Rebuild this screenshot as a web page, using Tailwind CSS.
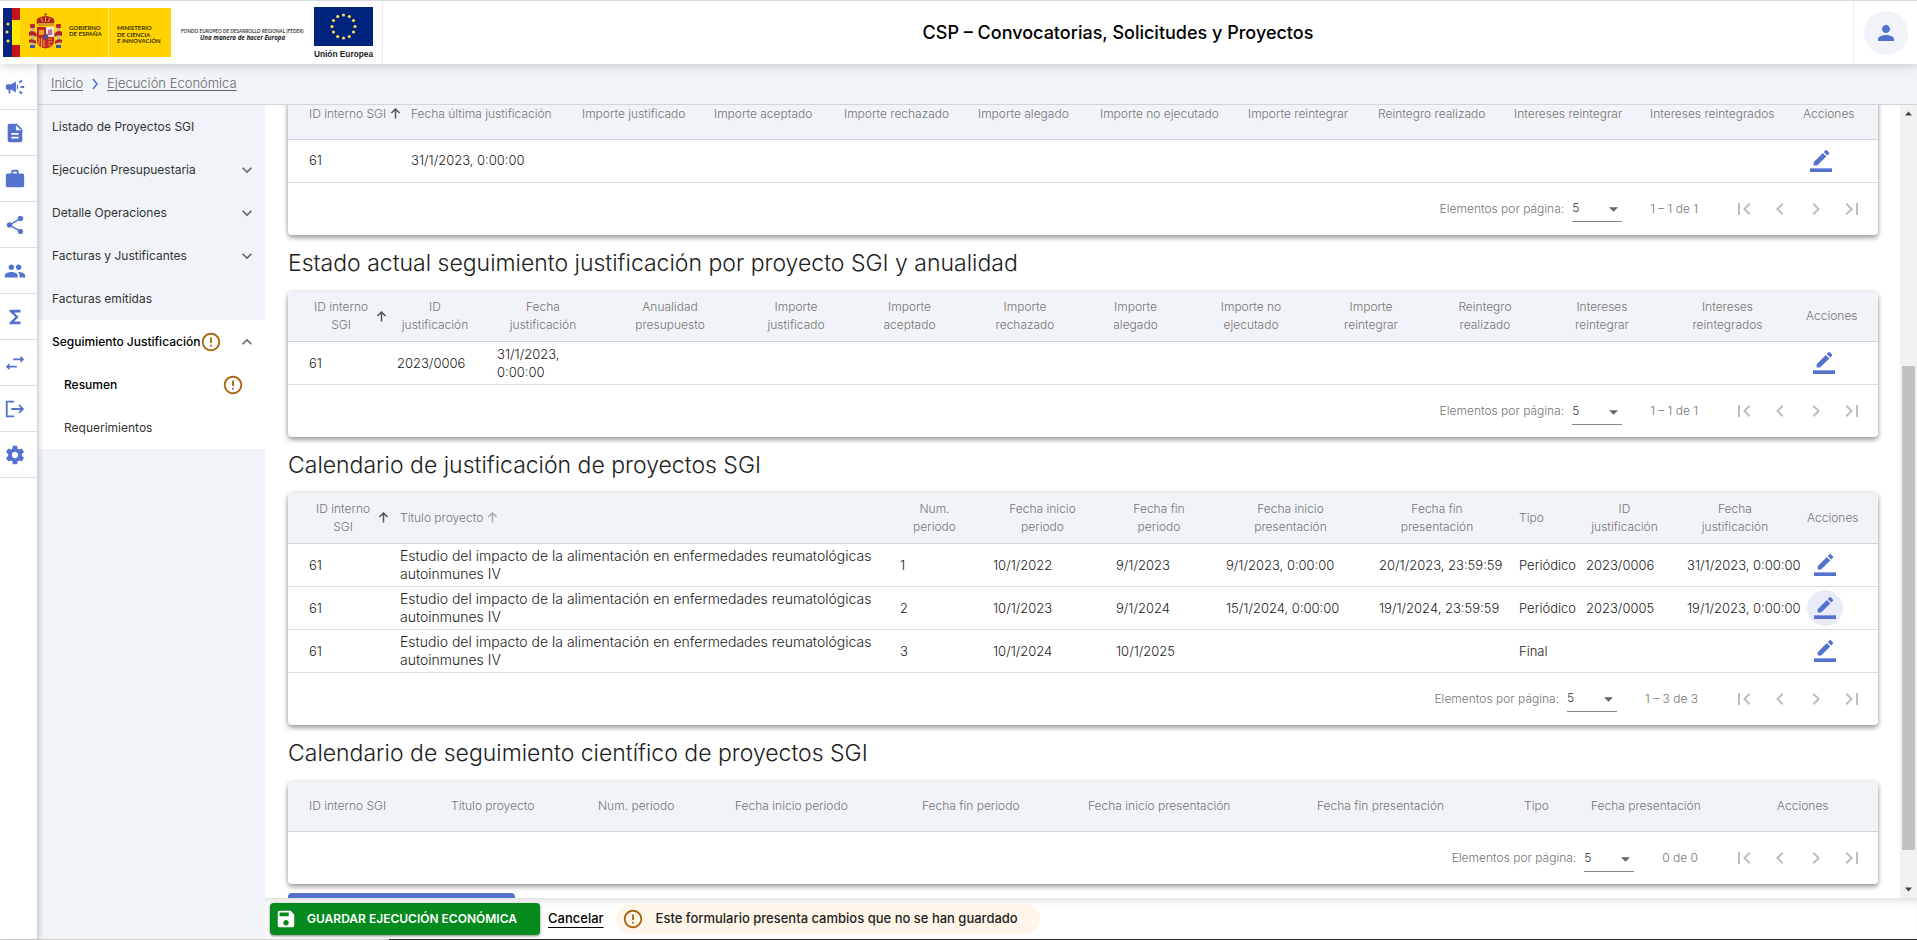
<!DOCTYPE html>
<html lang="es">
<head>
<meta charset="utf-8">
<meta name="viewport" content="width=device-width, initial-scale=1">
<title>CSP – Convocatorias, Solicitudes y Proyectos</title>
<script src="https://cdn.jsdelivr.net/npm/@tailwindcss/browser@4"></script>
</head>
<body class="h-screen flex flex-col overflow-hidden bg-white font-['Inter','Liberation_Sans',sans-serif] text-[#212121]">

<!-- Shared icons -->
<svg class="hidden" aria-hidden="true">
  <symbol id="i-edit" viewBox="0 0 24 24"><path d="M17.75 7L14 3.25l-10 10V17h3.75l10-10zm2.96-2.96a1 1 0 000-1.41L18.37.29a1 1 0 00-1.41 0L15 2.25 18.75 6l1.96-1.96z"/><path d="M0 20h24v4H0z"/></symbol>
  <symbol id="i-up" viewBox="0 0 12 12"><path d="M6 11.500V1.500M1.500 5.500L6 1.200l4.500 4.300" fill="none" stroke="currentColor" stroke-width="1.600"/></symbol>
  <symbol id="i-down" viewBox="0 0 24 24"><path d="M7.410 8.590L12 13.170l4.590-4.580L18 10l-6 6-6-6z"/></symbol>
  <symbol id="i-upc" viewBox="0 0 24 24"><path d="M12 8l-6 6 1.410 1.410L12 10.830l4.590 4.580L18 14z"/></symbol>
  <symbol id="i-first" viewBox="0 0 24 24"><path d="M18.410 16.590L13.820 12l4.590-4.590L17 6l-6 6 6 6zM6 6h2v12H6z"/></symbol>
  <symbol id="i-prev" viewBox="0 0 24 24"><path d="M15.410 7.410L14 6l-6 6 6 6 1.410-1.410L10.830 12z"/></symbol>
  <symbol id="i-next" viewBox="0 0 24 24"><path d="M10 6L8.590 7.410 13.170 12l-4.580 4.590L10 18l6-6z"/></symbol>
  <symbol id="i-last" viewBox="0 0 24 24"><path d="M5.590 7.410L10.180 12l-4.590 4.590L7 18l6-6-6-6zM16 6h2v12h-2z"/></symbol>
  <symbol id="i-warn" viewBox="0 0 24 24"><path d="M11 15h2v2h-2zm0-8h2v6h-2zm.99-5C6.470 2 2 6.480 2 12s4.470 10 9.990 10C17.520 22 22 17.520 22 12S17.520 2 11.990 2zM12 20c-4.420 0-8-3.580-8-8s3.580-8 8-8 8 3.580 8 8-3.580 8-8 8z"/></symbol>
  <symbol id="i-caret" viewBox="0 0 10 5"><path d="M0 0l5 5 5-5z"/></symbol>
</svg>

<header class="relative z-20 shrink-0 h-16 flex border-t border-[#d8dcdc] bg-white shadow-[0_3px_8px_rgba(0,0,0,0.14)]">
  <div class="w-[383px] shrink-0 border-r border-[#ebecf2]">
    <svg class="block w-[382px] h-[62px]" viewBox="0 1 382 62" role="img" aria-label="Gobierno de España, Ministerio de Ciencia e Innovación, Unión Europea">
      <rect x="3" y="8" width="168" height="49" fill="#ffd200"/>
      <rect x="3" y="8" width="9" height="49" fill="#08247f"/>
      <rect x="12" y="8" width="8" height="49" fill="#c1141b"/>
      <rect x="12" y="20" width="8" height="25" fill="#ffe800"/>
      <g fill="#ffe34a"><circle cx="8" cy="24" r="1.500"/><circle cx="7" cy="32" r="1.500"/><circle cx="8" cy="41" r="1.500"/></g>
      <rect x="108" y="8" width="1" height="49" fill="#ffe680"/>
      <!-- Coat of arms -->
      <g>
        <rect x="31" y="27" width="3" height="18" fill="#b9b4a8"/><rect x="57" y="27" width="3" height="18" fill="#b9b4a8"/>
        <rect x="30" y="24" width="5" height="4" rx="1" fill="#c1272d"/><rect x="56" y="24" width="5" height="4" rx="1" fill="#c1272d"/>
        <path d="M29 32q4-3 8 2l-1 3q-3-3-7-1zM62 32q-4-3-8 2l1 3q3-3 7-1z" fill="#b5232a"/>
        <path d="M29 40q3-2 7 1v3q-4-3-7-1zM62 40q-3-2-7 1v3q4-3 7-1z" fill="#b5232a"/>
        <rect x="30" y="45" width="5" height="3" fill="#3c5a9a"/><rect x="56" y="45" width="5" height="3" fill="#3c5a9a"/>
        <path d="M37 24q-2-6 4-7 5-2 9 0 6 1 4 7z" fill="#b5232a"/>
        <path d="M38 23h16v3H38z" fill="#d79a1e"/><path d="M41 18l2 4M50 18l-2 4M45.500 16v6" stroke="#f0b429" stroke-width="1"/>
        <path d="M45.500 13v4M44 14.500h3" stroke="#8c5a12" stroke-width="1"/>
        <path d="M37 27h17v14q0 6-8.500 7.500Q37 47 37 41z" fill="#c1272d"/>
        <path d="M46 27h8v10h-8z" fill="#ece2e4"/><path d="M48 35v-5l4-1v6z" fill="#b66a9a"/>
        <path d="M39 30h5v5h-5z" fill="#e2a52a"/><path d="M39 38v7M41.500 38v9M44 38v9" stroke="#f0b429" stroke-width="1"/>
        <path d="M48 39h4M48 42h4M48 45h3" stroke="#e2a52a" stroke-width="1"/>
        <ellipse cx="45.500" cy="37" rx="2.500" ry="3" fill="#3b4f9c" stroke="#c1272d"/>
      </g>
      <g fill="#3a3108" font-family="Lato, sans-serif" font-size="6" font-weight="700">
        <text x="69" y="30">GOBIERNO</text><text x="69" y="36">DE ESPAÑA</text>
        <text x="117" y="30">MINISTERIO</text><text x="117" y="37">DE CIENCIA</text><text x="117" y="43">E INNOVACIÓN</text>
      </g>
      <text x="181" y="33" font-family="Lato, sans-serif" font-size="4.700" font-weight="700" fill="#444">FONDO EUROPEO DE DESARROLLO REGIONAL (FEDER)</text>
      <text x="200" y="40" font-family="Open Sans, sans-serif" font-size="6.200" font-weight="700" font-style="italic" fill="#222">Una manera de hacer Europa</text>
      <rect x="314" y="7" width="59" height="39" fill="#00247d"/>
      <g fill="#f2e14c">
        <circle cx="343.500" cy="15" r="1.600"/><circle cx="349.300" cy="16.500" r="1.600"/><circle cx="353.500" cy="20.500" r="1.600"/><circle cx="355" cy="26.500" r="1.600"/><circle cx="353.500" cy="32" r="1.600"/><circle cx="349.300" cy="36.500" r="1.600"/><circle cx="343.500" cy="38" r="1.600"/><circle cx="337.700" cy="36.500" r="1.600"/><circle cx="333.500" cy="32" r="1.600"/><circle cx="332" cy="26.500" r="1.600"/><circle cx="333.500" cy="20.500" r="1.600"/><circle cx="337.700" cy="16.500" r="1.600"/>
      </g>
      <text x="314" y="57" font-family="Liberation Sans, sans-serif" font-size="8.300" font-weight="700" fill="#222">Unión Europea</text>
    </svg>
  </div>
  <div class="flex-1 flex items-center justify-center"><h1 class="text-lg font-medium text-black">CSP – Convocatorias, Solicitudes y Proyectos</h1></div>
  <div class="w-16 shrink-0 flex items-center justify-center border-l border-[#ebecf2]">
    <button aria-label="Usuario" class="size-11 rounded-full bg-[#f0f4f8] flex items-center justify-center text-[#5472cd]">
      <svg class="size-6" viewBox="0 0 24 24" fill="currentColor"><path d="M12 12c2.210 0 4-1.790 4-4s-1.790-4-4-4-4 1.790-4 4 1.790 4 4 4zm0 2c-2.670 0-8 1.340-8 4v2h16v-2c0-2.660-5.330-4-8-4z"/></svg>
    </button>
  </div>
</header>

<div class="flex-1 min-h-0 flex">
  <!-- Module rail -->
  <nav aria-label="Módulos" class="relative z-10 w-[38px] shrink-0 bg-white text-[#5472cd] fill-current border-r border-[#d3d6d9] shadow-[2px_0_4px_rgba(0,0,0,0.15)]">
    <a href="#" aria-label="Convocatorias" class="flex items-center h-[46px] pl-1 border-b border-[#dcdcdc]"><svg class="size-[22px]" viewBox="0 0 24 24"><path d="M18 11v2h4v-2h-4zm-2 6.610c.96.710 2.210 1.650 3.200 2.390.4-.53.8-1.070 1.200-1.600-.99-.74-2.240-1.680-3.200-2.400-.4.540-.8 1.080-1.200 1.610zM20.400 5.600c-.4-.53-.8-1.070-1.200-1.600-.99.740-2.240 1.680-3.200 2.400.4.530.8 1.070 1.200 1.600.96-.72 2.210-1.650 3.200-2.400zM4 9c-1.100 0-2 .9-2 2v2c0 1.100.9 2 2 2h1v4h2v-4h1l5 3V6L8 9H4zm11.500 3c0-1.330-.58-2.530-1.500-3.350v6.690c.92-.81 1.500-2.010 1.500-3.340z"/></svg></a>
    <a href="#" aria-label="Solicitudes" class="flex items-center h-[46px] pl-1 border-b border-[#dcdcdc]"><svg class="size-[22px]" viewBox="0 0 24 24"><path d="M14 2H6c-1.100 0-1.990.9-1.990 2L4 20c0 1.100.89 2 1.990 2H18c1.100 0 2-.9 2-2V8l-6-6zm2 16H8v-2h8v2zm0-4H8v-2h8v2zm-3-5V3.500L18.500 9H13z"/></svg></a>
    <a href="#" aria-label="Proyectos" class="flex items-center h-[46px] pl-1 border-b border-[#dcdcdc]"><svg class="size-[22px]" viewBox="0 0 24 24"><path d="M20 6h-4V4c0-1.110-.89-2-2-2h-4c-1.110 0-2 .89-2 2v2H4c-1.110 0-1.990.89-1.990 2L2 19c0 1.110.89 2 2 2h16c1.110 0 2-.89 2-2V8c0-1.110-.89-2-2-2zm-6 0h-4V4h4v2z"/></svg></a>
    <a href="#" aria-label="Relaciones" class="flex items-center h-[46px] pl-1 border-b border-[#dcdcdc]"><svg class="size-[22px]" viewBox="0 0 24 24"><path d="M18 16.080c-.76 0-1.440.3-1.960.77L8.910 12.700c.05-.23.09-.46.09-.7s-.04-.47-.09-.7l7.050-4.110c.54.500 1.250.81 2.040.81 1.660 0 3-1.340 3-3s-1.340-3-3-3-3 1.340-3 3c0 .24.04.47.09.7L8.040 9.810C7.500 9.310 6.790 9 6 9c-1.660 0-3 1.340-3 3s1.340 3 3 3c.79 0 1.500-.31 2.040-.81l7.120 4.160c-.05.21-.08.43-.08.65 0 1.610 1.310 2.920 2.920 2.920s2.920-1.310 2.920-2.920-1.310-2.920-2.920-2.920z"/></svg></a>
    <a href="#" aria-label="Grupos" class="flex items-center h-[46px] pl-1 border-b border-[#dcdcdc]"><svg class="size-[22px]" viewBox="0 0 24 24"><path d="M16 11c1.660 0 2.990-1.340 2.990-3S17.660 5 16 5s-3 1.340-3 3 1.340 3 3 3zm-8 0c1.660 0 2.990-1.340 2.990-3S9.660 5 8 5 5 6.340 5 8s1.340 3 3 3zm0 2c-2.330 0-7 1.170-7 3.500V19h14v-2.500c0-2.330-4.670-3.500-7-3.500zm8 0c-.29 0-.62.020-.97.050 1.160.84 1.970 1.970 1.970 3.450V19h6v-2.500c0-2.330-4.670-3.500-7-3.500z"/></svg></a>
    <a href="#" aria-label="Ejecución económica" class="flex items-center h-[46px] pl-1 border-b border-[#dcdcdc]"><svg class="size-[22px]" viewBox="0 0 24 24"><path d="M18 4H6v2l6.500 6L6 18v2h12v-3h-7l5-5-5-5h7z"/></svg></a>
    <a href="#" aria-label="Movimientos" class="flex items-center h-[46px] pl-1 border-b border-[#dcdcdc]"><svg class="size-[22px]" viewBox="0 0 24 24"><path d="M22 8l-4-4v3H10v2h8v3zM2 16l4 4v-3h8v-2H6v-3z"/></svg></a>
    <a href="#" aria-label="Salidas" class="flex items-center h-[46px] pl-1 border-b border-[#dcdcdc]"><svg class="size-[22px]" viewBox="0 0 24 24"><path d="M2 3h9v2H4v14h7v2H2zM17 7l-1.400 1.400L18.200 11H8v2h10.200l-2.600 2.600L17 17l5-5z"/></svg></a>
    <a href="#" aria-label="Configuración" class="flex items-center h-[46px] pl-1 border-b border-[#dcdcdc]"><svg class="size-[22px]" viewBox="0 0 24 24"><path d="M19.430 12.980c.04-.32.070-.64.070-.98s-.03-.66-.07-.98l2.110-1.650c.19-.15.240-.42.120-.64l-2-3.460c-.12-.22-.39-.3-.61-.22l-2.490 1c-.52-.4-1.080-.73-1.690-.98l-.38-2.650C14.460 2.180 14.250 2 14 2h-4c-.25 0-.46.180-.49.420l-.38 2.650c-.61.250-1.170.59-1.690.98l-2.490-1c-.23-.09-.49 0-.61.220l-2 3.460c-.13.220-.07.490.120.640l2.110 1.650c-.04.320-.07.650-.07.980s.03.660.070.980l-2.110 1.650c-.19.150-.24.420-.12.640l2 3.460c.12.220.390.300.610.220l2.490-1c.52.400 1.080.730 1.690.980l.38 2.650c.03.240.240.420.490.420h4c.25 0 .46-.18.490-.42l.38-2.650c.61-.25 1.170-.59 1.690-.98l2.490 1c.23.090.490 0 .61-.22l2-3.460c.12-.22.070-.49-.12-.64l-2.110-1.650zM12 15.500c-1.930 0-3.500-1.570-3.500-3.500s1.570-3.500 3.500-3.500 3.500 1.570 3.500 3.500-1.570 3.500-3.500 3.500z"/></svg></a>
  </nav>

  <div class="flex-1 min-w-0 flex flex-col">
    <nav aria-label="Ruta" class="shrink-0 h-[41px] flex items-center gap-2 pl-[13px] bg-[#f0f4f8] border-b border-[#cfd5d9] text-[13px] font-light text-[#666]">
      <a href="#" class="underline underline-offset-2">Inicio</a>
      <svg class="w-2 h-3 text-[#5472cd]" viewBox="0 0 8 12" fill="none" stroke="currentColor" stroke-width="1.500"><path d="M2 1l4 5-4 5"/></svg>
      <a href="#" class="underline underline-offset-2">Ejecución Económica</a>
    </nav>

    <div class="flex-1 min-h-0 flex">
      <!-- Section menu -->
      <nav aria-label="Secciones" class="w-[227px] shrink-0 bg-[#f0f4f8] text-xs font-normal text-[#333]">
        <a href="#" class="flex items-center h-[43px] pl-[14px]">Listado de Proyectos SGI</a>
        <a href="#" class="flex items-center justify-between h-[43px] pl-[14px] pr-2">Ejecución Presupuestaria<svg class="size-5 fill-[#666]"><use href="#i-down"/></svg></a>
        <a href="#" class="flex items-center justify-between h-[43px] pl-[14px] pr-2">Detalle Operaciones<svg class="size-5 fill-[#666]"><use href="#i-down"/></svg></a>
        <a href="#" class="flex items-center justify-between h-[43px] pl-[14px] pr-2">Facturas y Justificantes<svg class="size-5 fill-[#666]"><use href="#i-down"/></svg></a>
        <a href="#" class="flex items-center h-[43px] pl-[14px]">Facturas emitidas</a>
        <div class="bg-white">
          <a href="#" class="flex items-center h-[43px] pl-[14px] pr-2 font-medium text-black"><span class="whitespace-nowrap">Seguimiento Justificación</span><svg class="size-[22px] shrink-0 fill-[#a9650f]"><use href="#i-warn"/></svg><svg class="ml-auto size-5 fill-[#666]"><use href="#i-upc"/></svg></a>
          <a href="#" class="flex items-center justify-between h-[43px] pl-[26px] pr-[21px] font-medium text-black">Resumen<svg class="size-[22px] fill-[#a9650f]"><use href="#i-warn"/></svg></a>
          <a href="#" class="flex items-center h-[43px] pl-[26px]">Requerimientos</a>
        </div>
      </nav>

      <div class="flex-1 min-w-0 flex flex-col">
        <div class="flex-1 min-h-0 flex">
          <main class="flex-1 min-w-0 overflow-hidden pl-[23px] pr-[22px]">

            <section class="-mt-4 bg-white rounded shadow-[0_3px_5px_rgba(0,0,0,0.34),0_0_5px_rgba(0,0,0,0.14)]">
              <table class="w-full table-fixed text-[13px] font-light text-left">
                <colgroup><col class="w-[123px]"><col class="w-[171px]"><col class="w-[132px]"><col class="w-[130px]"><col class="w-[134px]"><col class="w-[122px]"><col class="w-[148px]"><col class="w-[130px]"><col class="w-[136px]"><col class="w-[136px]"><col class="w-[153px]"><col class="w-[75px]"></colgroup>
                <thead class="bg-[#f0f4f8] text-xs text-[#757575] whitespace-nowrap">
                  <tr class="h-[50px] border-b border-[#cfd5d9] *:font-light">
                    <th class="pl-[21px]"><button class="flex items-center gap-1">ID interno SGI <svg class="size-[11px] text-[#555]"><use href="#i-up"/></svg></button></th>
                    <th>Fecha última justificación</th><th>Importe justificado</th><th>Importe aceptado</th><th>Importe rechazado</th><th>Importe alegado</th><th>Importe no ejecutado</th><th>Importe reintegrar</th><th>Reintegro realizado</th><th>Intereses reintegrar</th><th>Intereses reintegrados</th><th>Acciones</th>
                  </tr>
                </thead>
                <tbody>
                  <tr class="h-[43px] border-b border-[#dcdcdc]">
                    <td class="pl-[21px]">61</td><td>31/1/2023, 0:00:00</td><td></td><td></td><td></td><td></td><td></td><td></td><td></td><td></td><td></td>
                    <td><button aria-label="Editar" class="size-9 flex items-center justify-center"><svg class="size-[22px] fill-[#5472cd]"><use href="#i-edit"/></svg></button></td>
                  </tr>
                </tbody>
              </table>
              <div class="h-[52px] flex items-center justify-end pr-2 text-xs font-light text-[#757575]">
                <label for="pp1">Elementos por página:</label>
                <span class="relative ml-2 block"><select id="pp1" class="appearance-none block w-[50px] h-[27px] text-[12px] text-[#333] border-b border-[#888]"><option>5</option></select><svg class="absolute right-1 top-3 w-[9px] h-[5px] fill-[#666] pointer-events-none"><use href="#i-caret"/></svg></span>
                <span class="ml-7 mr-7">1 – 1 de 1</span>
                <button aria-label="Primera página" class="size-9 flex items-center justify-center"><svg class="size-6 fill-[#bdbdbd]"><use href="#i-first"/></svg></button><button aria-label="Página anterior" class="size-9 flex items-center justify-center"><svg class="size-6 fill-[#bdbdbd]"><use href="#i-prev"/></svg></button><button aria-label="Página siguiente" class="size-9 flex items-center justify-center"><svg class="size-6 fill-[#bdbdbd]"><use href="#i-next"/></svg></button><button aria-label="Última página" class="size-9 flex items-center justify-center"><svg class="size-6 fill-[#bdbdbd]"><use href="#i-last"/></svg></button>
              </div>
            </section>

            <h2 class="h-[57px] flex items-center text-[23px] font-light">Estado actual seguimiento justificación por proyecto SGI y anualidad</h2>
            <section class="bg-white rounded shadow-[0_3px_5px_rgba(0,0,0,0.34),0_0_5px_rgba(0,0,0,0.14)]">
              <table class="w-full table-fixed text-[13px] leading-[18px] font-light text-left">
                <colgroup><col class="w-[109px]"><col class="w-[100px]"><col class="w-[116px]"><col class="w-[138px]"><col class="w-[114px]"><col class="w-[113px]"><col class="w-[118px]"><col class="w-[103px]"><col class="w-[128px]"><col class="w-[112px]"><col class="w-[116px]"><col class="w-[118px]"><col class="w-[133px]"><col class="w-[72px]"></colgroup>
                <thead class="bg-[#f0f4f8] text-xs leading-[18px] text-[#757575] whitespace-nowrap">
                  <tr class="h-[50px] border-b border-[#cfd5d9] *:font-light *:text-center *:pr-6">
                    <th><button class="flex items-center gap-2 pl-[26px]"><span>ID interno<br>SGI</span> <svg class="size-[11px] shrink-0 text-[#555]"><use href="#i-up"/></svg></button></th>
                    <th>ID<br>justificación</th><th>Fecha<br>justificación</th><th>Anualidad<br>presupuesto</th><th>Importe<br>justificado</th><th>Importe<br>aceptado</th><th>Importe<br>rechazado</th><th>Importe<br>alegado</th><th>Importe no<br>ejecutado</th><th>Importe<br>reintegrar</th><th>Reintegro<br>realizado</th><th>Intereses<br>reintegrar</th><th>Intereses<br>reintegrados</th><th>Acciones</th>
                  </tr>
                </thead>
                <tbody>
                  <tr class="h-[43px] border-b border-[#dcdcdc]">
                    <td class="pl-[21px]">61</td><td>2023/0006</td><td>31/1/2023,<br>0:00:00</td><td></td><td></td><td></td><td></td><td></td><td></td><td></td><td></td><td></td><td></td>
                    <td><button aria-label="Editar" class="size-9 flex items-center justify-center"><svg class="size-[22px] fill-[#5472cd]"><use href="#i-edit"/></svg></button></td>
                  </tr>
                </tbody>
              </table>
              <div class="h-[52px] flex items-center justify-end pr-2 text-xs font-light text-[#757575]">
                <label for="pp2">Elementos por página:</label>
                <span class="relative ml-2 block"><select id="pp2" class="appearance-none block w-[50px] h-[27px] text-[12px] text-[#333] border-b border-[#888]"><option>5</option></select><svg class="absolute right-1 top-3 w-[9px] h-[5px] fill-[#666] pointer-events-none"><use href="#i-caret"/></svg></span>
                <span class="ml-7 mr-7">1 – 1 de 1</span>
                <button aria-label="Primera página" class="size-9 flex items-center justify-center"><svg class="size-6 fill-[#bdbdbd]"><use href="#i-first"/></svg></button><button aria-label="Página anterior" class="size-9 flex items-center justify-center"><svg class="size-6 fill-[#bdbdbd]"><use href="#i-prev"/></svg></button><button aria-label="Página siguiente" class="size-9 flex items-center justify-center"><svg class="size-6 fill-[#bdbdbd]"><use href="#i-next"/></svg></button><button aria-label="Última página" class="size-9 flex items-center justify-center"><svg class="size-6 fill-[#bdbdbd]"><use href="#i-last"/></svg></button>
              </div>
            </section>

            <h2 class="h-14 flex items-center text-[23px] font-light">Calendario de justificación de proyectos SGI</h2>
            <section class="bg-white rounded shadow-[0_3px_5px_rgba(0,0,0,0.34),0_0_5px_rgba(0,0,0,0.14)]">
              <table class="w-full table-fixed text-[13px] leading-[18px] font-light text-left">
                <colgroup><col class="w-[112px]"><col class="w-[500px]"><col class="w-[93px]"><col class="w-[123px]"><col class="w-[110px]"><col class="w-[153px]"><col class="w-[140px]"><col class="w-[67px]"><col class="w-[101px]"><col class="w-[120px]"><col class="w-[71px]"></colgroup>
                <thead class="bg-[#f0f4f8] text-xs leading-[18px] text-[#757575] whitespace-nowrap">
                  <tr class="h-[50px] border-b border-[#cfd5d9] *:font-light *:text-center *:pr-6">
                    <th><button class="flex items-center gap-2 pl-[28px]"><span>ID interno<br>SGI</span> <svg class="size-[11px] shrink-0 text-[#555]"><use href="#i-up"/></svg></button></th>
                    <th><button class="flex items-center gap-1">Título proyecto <svg class="size-[11px] text-[#aaa]"><use href="#i-up"/></svg></button></th>
                    <th>Num.<br>periodo</th><th>Fecha inicio<br>periodo</th><th>Fecha fin<br>periodo</th><th>Fecha inicio<br>presentación</th><th>Fecha fin<br>presentación</th><th><span class="block text-left">Tipo</span></th><th>ID<br>justificación</th><th>Fecha<br>justificación</th><th>Acciones</th>
                  </tr>
                </thead>
                <tbody class="whitespace-nowrap">
                  <tr class="h-[43px] border-b border-[#dcdcdc]">
                    <td class="pl-[21px]">61</td><td class="text-sm leading-[18px]">Estudio del impacto de la alimentación en enfermedades reumatológicas<br>autoinmunes IV</td><td>1</td><td>10/1/2022</td><td>9/1/2023</td><td>9/1/2023, 0:00:00</td><td>20/1/2023, 23:59:59</td><td>Periódico</td><td>2023/0006</td><td>31/1/2023, 0:00:00</td>
                    <td><button aria-label="Editar" class="size-9 flex items-center justify-center"><svg class="size-[22px] fill-[#5472cd]"><use href="#i-edit"/></svg></button></td>
                  </tr>
                  <tr class="h-[43px] border-b border-[#dcdcdc]">
                    <td class="pl-[21px]">61</td><td class="text-sm leading-[18px]">Estudio del impacto de la alimentación en enfermedades reumatológicas<br>autoinmunes IV</td><td>2</td><td>10/1/2023</td><td>9/1/2024</td><td>15/1/2024, 0:00:00</td><td>19/1/2024, 23:59:59</td><td>Periódico</td><td>2023/0005</td><td>19/1/2023, 0:00:00</td>
                    <td><button aria-label="Editar" class="size-9 flex items-center justify-center rounded-full bg-[#e9ecf8]"><svg class="size-[22px] fill-[#5472cd]"><use href="#i-edit"/></svg></button></td>
                  </tr>
                  <tr class="h-[43px] border-b border-[#dcdcdc]">
                    <td class="pl-[21px]">61</td><td class="text-sm leading-[18px]">Estudio del impacto de la alimentación en enfermedades reumatológicas<br>autoinmunes IV</td><td>3</td><td>10/1/2024</td><td>10/1/2025</td><td></td><td></td><td>Final</td><td></td><td></td>
                    <td><button aria-label="Editar" class="size-9 flex items-center justify-center"><svg class="size-[22px] fill-[#5472cd]"><use href="#i-edit"/></svg></button></td>
                  </tr>
                </tbody>
              </table>
              <div class="h-[52px] flex items-center justify-end pr-2 text-xs font-light text-[#757575]">
                <label for="pp3">Elementos por página:</label>
                <span class="relative ml-2 block"><select id="pp3" class="appearance-none block w-[50px] h-[27px] text-[12px] text-[#333] border-b border-[#888]"><option>5</option></select><svg class="absolute right-1 top-3 w-[9px] h-[5px] fill-[#666] pointer-events-none"><use href="#i-caret"/></svg></span>
                <span class="ml-7 mr-7">1 – 3 de 3</span>
                <button aria-label="Primera página" class="size-9 flex items-center justify-center"><svg class="size-6 fill-[#bdbdbd]"><use href="#i-first"/></svg></button><button aria-label="Página anterior" class="size-9 flex items-center justify-center"><svg class="size-6 fill-[#bdbdbd]"><use href="#i-prev"/></svg></button><button aria-label="Página siguiente" class="size-9 flex items-center justify-center"><svg class="size-6 fill-[#bdbdbd]"><use href="#i-next"/></svg></button><button aria-label="Última página" class="size-9 flex items-center justify-center"><svg class="size-6 fill-[#bdbdbd]"><use href="#i-last"/></svg></button>
              </div>
            </section>

            <h2 class="h-[57px] flex items-center text-[23px] font-light">Calendario de seguimiento científico de proyectos SGI</h2>
            <section class="bg-white rounded shadow-[0_3px_5px_rgba(0,0,0,0.34),0_0_5px_rgba(0,0,0,0.14)]">
              <table class="w-full table-fixed text-left">
                <colgroup><col class="w-[163px]"><col class="w-[147px]"><col class="w-[137px]"><col class="w-[187px]"><col class="w-[166px]"><col class="w-[229px]"><col class="w-[207px]"><col class="w-[67px]"><col class="w-[186px]"><col class="w-[101px]"></colgroup>
                <thead class="bg-[#f0f4f8] text-xs text-[#757575] whitespace-nowrap">
                  <tr class="h-[50px] border-b border-[#cfd5d9] *:font-light">
                    <th class="pl-[21px]">ID interno SGI</th><th>Título proyecto</th><th>Num. periodo</th><th>Fecha inicio periodo</th><th>Fecha fin periodo</th><th>Fecha inicio presentación</th><th>Fecha fin presentación</th><th>Tipo</th><th>Fecha presentación</th><th>Acciones</th>
                  </tr>
                </thead>
              </table>
              <div class="h-[52px] flex items-center justify-end pr-2 text-xs font-light text-[#757575]">
                <label for="pp4">Elementos por página:</label>
                <span class="relative ml-2 block"><select id="pp4" class="appearance-none block w-[50px] h-[27px] text-[12px] text-[#333] border-b border-[#888]"><option>5</option></select><svg class="absolute right-1 top-3 w-[9px] h-[5px] fill-[#666] pointer-events-none"><use href="#i-caret"/></svg></span>
                <span class="ml-7 mr-7">0 de 0</span>
                <button aria-label="Primera página" class="size-9 flex items-center justify-center"><svg class="size-6 fill-[#bdbdbd]"><use href="#i-first"/></svg></button><button aria-label="Página anterior" class="size-9 flex items-center justify-center"><svg class="size-6 fill-[#bdbdbd]"><use href="#i-prev"/></svg></button><button aria-label="Página siguiente" class="size-9 flex items-center justify-center"><svg class="size-6 fill-[#bdbdbd]"><use href="#i-next"/></svg></button><button aria-label="Última página" class="size-9 flex items-center justify-center"><svg class="size-6 fill-[#bdbdbd]"><use href="#i-last"/></svg></button>
              </div>
            </section>
            <button aria-label="Añadir" class="block mt-[9px] w-[227px] h-9 rounded bg-[#5472cd]"></button>
          </main>

          <!-- Scroll bar -->
          <div class="w-[17px] shrink-0 flex flex-col items-center bg-[#f1f1f1]" aria-hidden="true">
            <svg class="my-[6px] w-[7px] h-[5px] shrink-0 fill-[#444]" viewBox="0 0 7 4"><path d="M0 4l3.500-4L7 4z"/></svg>
            <div class="w-full basis-[244px] grow-0"></div>
            <div class="w-[13px] flex-1 bg-[#c1c1c1]"></div>
            <div class="h-12 shrink-0 flex items-end pb-[6px]"><svg class="w-[7px] h-[5px] fill-[#444]" viewBox="0 0 7 4"><path d="M0 0l3.500 4L7 0z"/></svg></div>
          </div>
        </div>

        <footer class="relative shrink-0 h-[41px] flex items-center pl-[5px] bg-white shadow-[inset_0_6px_6px_-3px_rgba(0,0,0,0.13)] text-[13px]">
          <button class="flex items-center gap-[10px] h-8 w-[270px] pl-[5px] rounded bg-[#058a1d] text-white text-xs font-semibold shadow-[0_1px_3px_rgba(0,0,0,0.5)]"><svg class="size-[22px] fill-white" viewBox="0 0 24 24"><path d="M17 3H5c-1.110 0-2 .9-2 2v14c0 1.100.890 2 2 2h14c1.100 0 2-.9 2-2V7l-4-4zm-5 16c-1.660 0-3-1.340-3-3s1.340-3 3-3 3 1.340 3 3-1.340 3-3 3zm3-10H5V5h10v4z"/></svg>GUARDAR EJECUCIÓN ECONÓMICA</button>
          <a href="#" class="ml-2 font-medium text-black underline underline-offset-4">Cancelar</a>
          <p class="ml-3 h-[30px] flex items-center gap-3 pl-[6px] pr-[22px] rounded-full bg-[#fff6e9] font-medium text-[#222]"><svg class="size-[22px] fill-[#a9650f]"><use href="#i-warn"/></svg>Este formulario presenta cambios que no se han guardado</p>
        </footer>
      </div>
    </div>
  </div>
</div>
<div class="shrink-0 h-px flex bg-[#2b2b2b]"><div class="w-[389px] bg-[#cfcfcf]"></div></div>
</body>
</html>
